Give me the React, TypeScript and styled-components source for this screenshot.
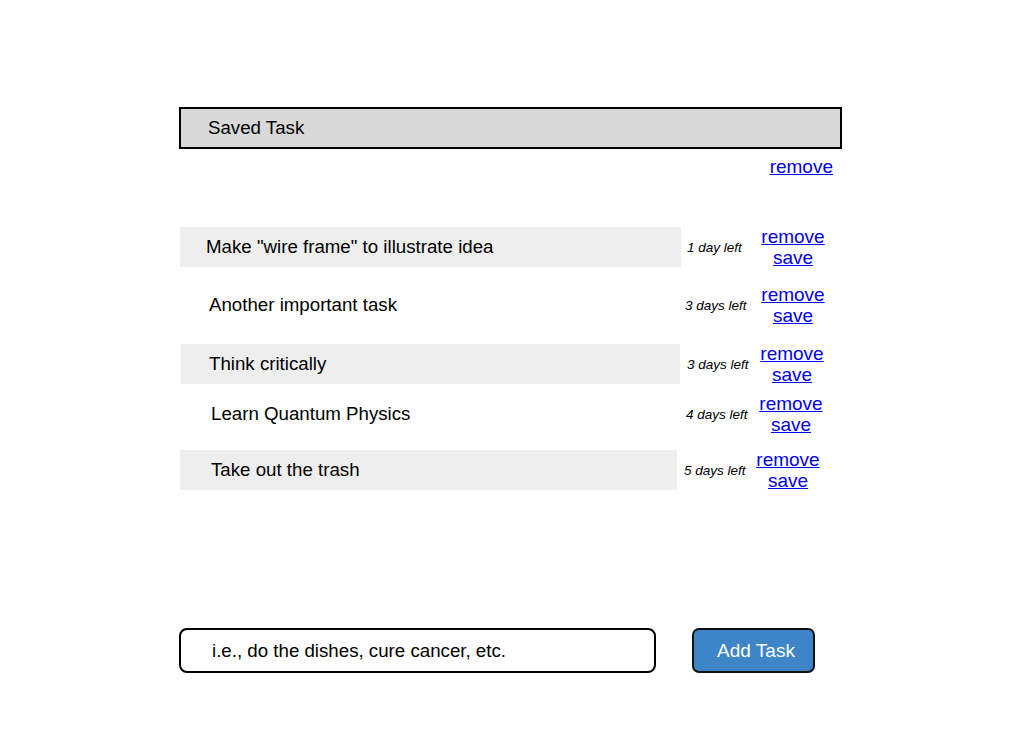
import React from "react";
import styled, { createGlobalStyle } from "styled-components";

const Global = createGlobalStyle`
  html, body { margin: 0; padding: 0; background: #ffffff; }
  body { font-family: "Liberation Sans", Arial, sans-serif; color: #000; }
`;

const Page = styled.div`
  width: 1029px;
  height: 750px;
  padding: 107px 0 0 179px;
  box-sizing: border-box;
`;

const Column = styled.div`
  width: 663px;
  display: flex;
  flex-direction: column;
`;

const SavedBox = styled.div`
  height: 42px;
  box-sizing: border-box;
  border: 2px solid #000;
  background: #d9d9d9;
  display: flex;
  align-items: center;
  padding-left: 27px;
  font-size: 18.7px;
`;

const SavedActions = styled.div`
  display: flex;
  justify-content: flex-end;
  align-items: flex-start;
  padding: 7px 9px 0 0;
  height: 78px;
  box-sizing: border-box;
`;

const Link = styled.a`
  color: #0000ee;
  text-decoration: underline;
  font-size: 19px;
  line-height: 21px;
  cursor: pointer;
  white-space: nowrap;
`;

const List = styled.div`
  display: flex;
  flex-direction: column;
`;

const Row = styled.div<{ $top: number }>`
  display: flex;
  align-items: center;
  height: 40px;
  margin-top: ${(p) => p.$top}px;
`;

const Cell = styled.div<{ $shade: boolean; $width: number; $indent: number; $shift: number }>`
  width: ${(p) => p.$width}px;
  height: 40px;
  flex-shrink: 0;
  margin-left: ${(p) => p.$shift}px;
  box-sizing: border-box;
  background: ${(p) => (p.$shade ? "#eeeeee" : "transparent")};
  display: flex;
  align-items: center;
  padding-left: ${(p) => p.$indent}px;
  font-size: 18.7px;
  white-space: nowrap;
`;

const Due = styled.div<{ $gap: number }>`
  font-style: italic;
  font-size: 13.5px;
  margin-left: ${(p) => p.$gap}px;
  width: 66px;
  flex-shrink: 0;
  white-space: nowrap;
`;

const Actions = styled.div<{ $gap: number }>`
  display: flex;
  flex-direction: column;
  align-items: center;
  margin-left: ${(p) => p.$gap}px;
  width: 64px;
  flex-shrink: 0;
`;

const Composer = styled.div`
  display: flex;
  align-items: center;
  gap: 36px;
  margin-top: 138px;
`;

const Input = styled.div`
  width: 477px;
  height: 45px;
  box-sizing: border-box;
  border: 2px solid #000;
  border-radius: 8px;
  display: flex;
  align-items: center;
  padding-left: 31px;
  font-size: 18.7px;
`;

const Button = styled.button`
  width: 123px;
  height: 45px;
  box-sizing: border-box;
  border: 2px solid #111;
  border-radius: 7px;
  background: #3d85c6;
  color: #fff;
  font-family: "Liberation Sans", Arial, sans-serif;
  font-size: 19px;
  padding: 0 0 0 5px;
`;

const tasks = [
  { text: 'Make "wire frame" to illustrate idea', due: "1 day left", shade: true, top: 0, width: 501, indent: 26, shift: 1, dueGap: 6, actGap: 8 },
  { text: "Another important task", due: "3 days left", shade: false, top: 18, width: 501, indent: 30, shift: 0, dueGap: 5, actGap: 10 },
  { text: "Think critically", due: "3 days left", shade: true, top: 19, width: 499, indent: 28, shift: 2, dueGap: 7, actGap: 7 },
  { text: "Learn Quantum Physics", due: "4 days left", shade: false, top: 10, width: 501, indent: 32, shift: 0, dueGap: 6, actGap: 7 },
  { text: "Take out the trash", due: "5 days left", shade: true, top: 16, width: 497, indent: 31, shift: 1, dueGap: 7, actGap: 6 },
];

export default function App() {
  return (
    <Page>
      <Global />
      <Column>
        <SavedBox>Saved Task</SavedBox>
        <SavedActions>
          <Link>remove</Link>
        </SavedActions>
        <List>
          {tasks.map((t) => (
            <Row key={t.text} $top={t.top}>
              <Cell $shade={t.shade} $width={t.width} $indent={t.indent} $shift={t.shift}>
                {t.text}
              </Cell>
              <Due $gap={t.dueGap}>{t.due}</Due>
              <Actions $gap={t.actGap}>
                <Link>remove</Link>
                <Link>save</Link>
              </Actions>
            </Row>
          ))}
        </List>
        <Composer>
          <Input>i.e., do the dishes, cure cancer, etc.</Input>
          <Button>Add Task</Button>
        </Composer>
      </Column>
    </Page>
  );
}
